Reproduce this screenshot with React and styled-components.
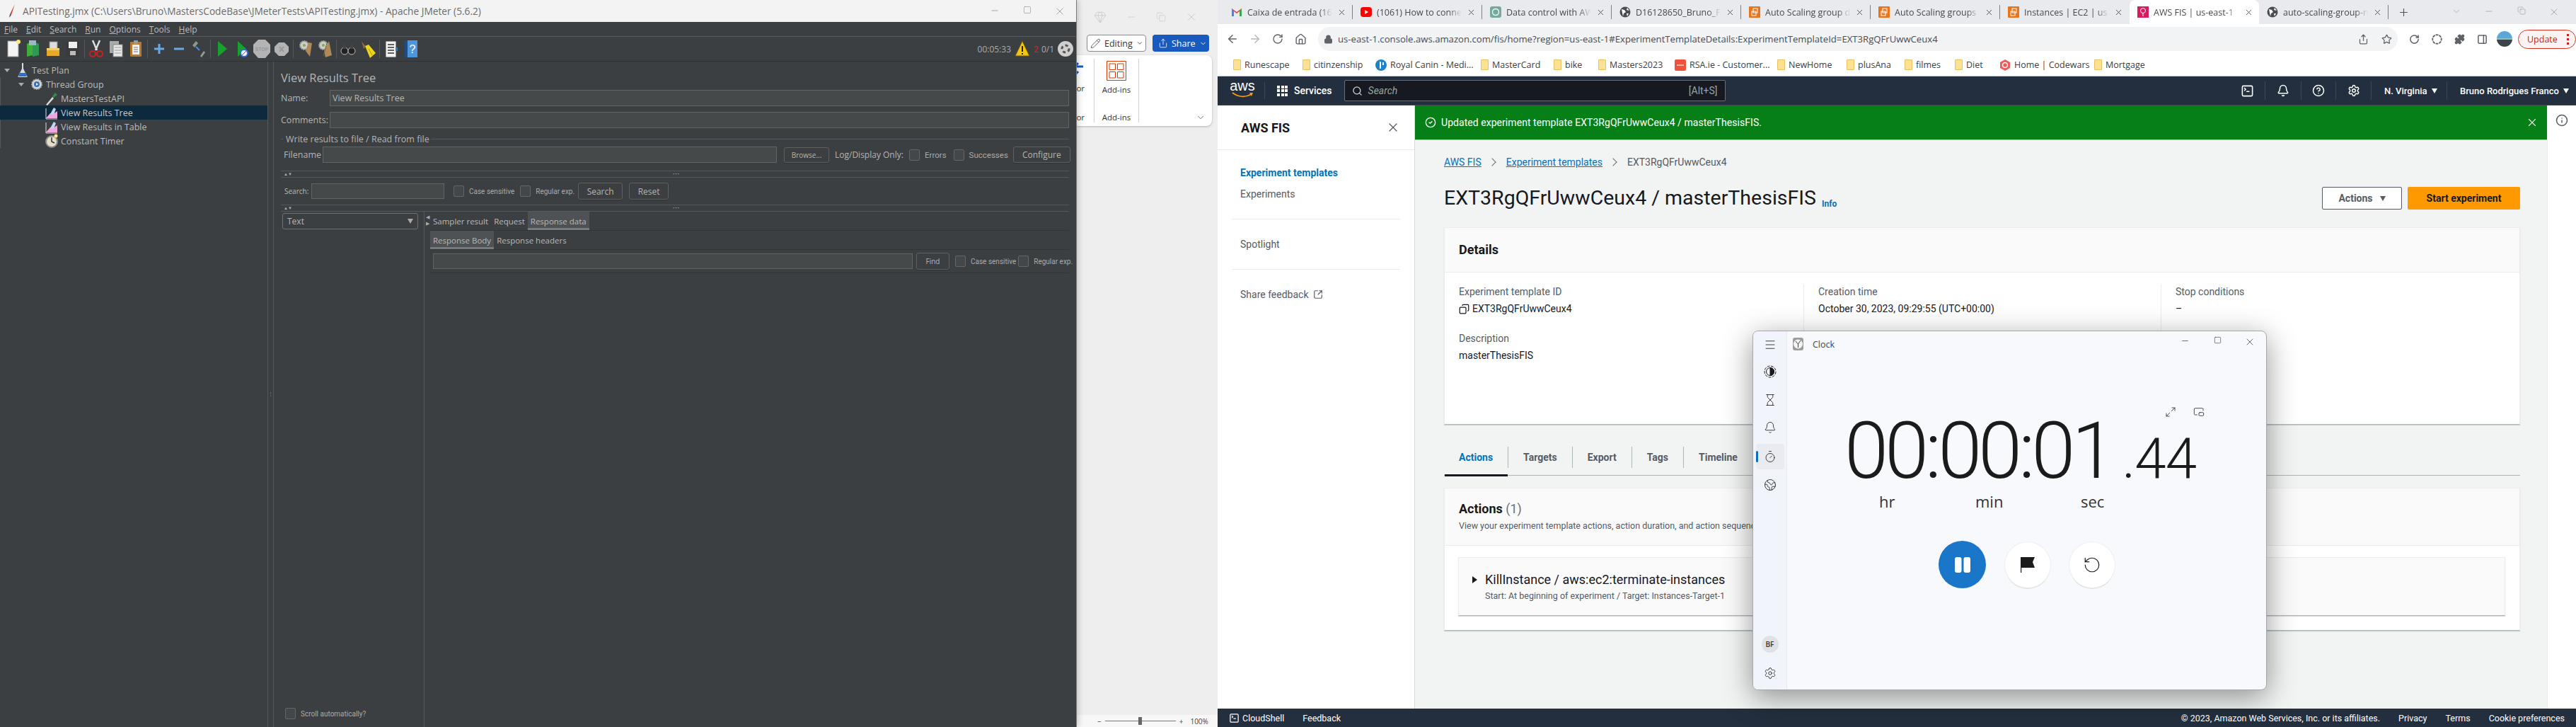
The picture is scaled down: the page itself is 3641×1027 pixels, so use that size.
import React from "react";
import styled, { createGlobalStyle } from "styled-components";
import {
  ArrowLeft, ArrowRight, RotateCw, Home, Lock, Star, Puzzle, PanelRight, Plus, ChevronDown, Minus, X, Square,
  Copy, SquareTerminal, Bell, CircleHelp, Settings, Search as SearchIcon, SquareArrowOutUpRight, CircleCheck, Info,
  Gem, Pencil, Share, Menu, Hourglass, Timer, Maximize2, RotateCcw, Earth, CircleDashed, PictureInPicture2,
} from "lucide-react";

const ui = `"Open Sans", "Noto Sans", sans-serif`;
const ember = `Roboto, "Noto Sans", sans-serif`;

const Global = createGlobalStyle`
  html, body { margin: 0; padding: 0; background: #eee; }
  * { box-sizing: border-box; }
  body { font-family: ${ui}; }
`;

const Desktop = styled.div`
  position: relative;
  width: 3641px;
  height: 1027px;
  display: flex;
  overflow: hidden;
`;

/* ---------- jmeter ---------- */
const JMeter = styled.div`
  width: 1522px;
  height: 100%;
  display: flex;
  flex-direction: column;
  background: #3c3f41;
  color: #bbb;
  font-size: 12px;
  border-right: 1px solid #7a7a7a;
  box-shadow: 2px 0 8px rgba(0, 0, 0, 0.2);
  z-index: 2;
`;
const WinTitle = styled.div`
  height: 31px;
  flex: none;
  display: flex;
  align-items: center;
  background: #f3f3f3;
  color: #6b6b6b;
  font-size: 13.7px;
  padding-left: 11px;
  gap: 9px;
`;
const WinButtons = styled.div`
  margin-left: auto;
  display: flex;
  color: #777;
`;
const WinButton = styled.span`
  width: 46px;
  display: flex;
  justify-content: center;
`;
const MenuBar = styled.div`
  height: 21px;
  flex: none;
  display: flex;
  align-items: center;
  gap: 12px;
  padding-left: 6px;
  border-bottom: 1px solid #5b5e60;
  u { text-decoration: underline; text-underline-offset: 1px; }
`;
const ToolBar = styled.div`
  height: 35px;
  flex: none;
  display: flex;
  align-items: center;
  padding-left: 5px;
  border-bottom: 1px solid #2f3234;
`;
const ToolCell = styled.span`
  width: 28px;
  height: 30px;
  display: flex;
  align-items: center;
  justify-content: center;
`;
const ToolSep = styled.span`
  width: 1px;
  height: 26px;
  margin: 0 2px;
  background: #55585a;
`;
const ToolStatus = styled.div`
  margin-left: auto;
  display: flex;
  align-items: center;
  gap: 4px;
  padding-right: 3px;
  font-size: 12px;
  color: #aaa;
`;
const Panes = styled.div`
  flex: 1;
  display: flex;
  min-height: 0;
`;
const TreePane = styled.div`
  width: 378px;
  flex: none;
  padding-top: 2px;
`;
const TreeRow = styled.div`
  height: 20px;
  display: flex;
  align-items: center;
  gap: 4px;
  padding-left: ${(p) => p.$indent}px;
  font-size: 12.5px;
  background: ${(p) => (p.$selected ? "#0d293e" : "transparent")};
  color: ${(p) => (p.$selected ? "#c8c8c8" : "#bbb")};
  box-shadow: ${(p) => (p.$guides > 0 && !p.$selected ? "inset 10px 0 0 -9px #55585a" : "none")};
`;
const Caret = styled.span`
  width: 0;
  height: 0;
  margin-right: 5px;
  border: 4px solid transparent;
  border-top: 5px solid #aaa;
  border-bottom: 0;
`;
const PaneHandle = styled.div`
  width: 9px;
  flex: none;
  display: flex;
  align-items: center;
  justify-content: center;
  border-left: 1px solid #55585a;
  border-right: 1px solid #55585a;
  color: #999;
  font-size: 7px;
  letter-spacing: 0;
  line-height: 4px;
`;
const FormPane = styled.div`
  flex: 1;
  min-width: 0;
  display: flex;
  flex-direction: column;
  padding: 10px 10px 0;
`;
const PanelTitle = styled.div`
  height: 26px;
  font-size: 16.5px;
  line-height: 26px;
  color: #b4b4b4;
`;
const FieldRow = styled.div`
  display: flex;
  align-items: center;
  height: 23px;
  margin-top: ${(p) => p.$top || 0}px;
  gap: ${(p) => p.$gap || 0}px;
  padding-left: ${(p) => p.$left || 0}px;
`;
const FieldLabel = styled.label`
  width: ${(p) => p.$w}px;
  flex: none;
  font-size: ${(p) => p.$size || 12.5}px;
  margin-left: ${(p) => p.$left || 0}px;
  color: #b4b4b4;
`;
const Input = styled.div`
  height: ${(p) => p.$h || 23}px;
  width: ${(p) => (p.$w ? `${p.$w}px` : "auto")};
  flex: ${(p) => (p.$w ? "none" : 1)};
  padding: 2px 3px;
  font-size: 12.5px;
  color: #b4b4b4;
  background: #45494a;
  border: 1px solid #646464;
`;
const Legend = styled.div`
  display: flex;
  align-items: center;
  gap: 2px;
  height: 16px;
  margin-top: 7px;
  padding-left: 7px;
  font-size: 12.5px;
  color: #b4b4b4;
  &::before { content: ""; order: -1; width: 3px; margin-left: -7px; margin-right: 2px; height: 1px; background: #55585a; }
  &::after { content: ""; flex: 1; height: 1px; background: #55585a; }
`;
const JButton = styled.span`
  height: ${(p) => p.$h || 23}px;
  width: ${(p) => p.$w}px;
  flex: none;
  display: flex;
  align-items: center;
  justify-content: center;
  font-size: ${(p) => p.$size || 12}px;
  color: #b4b4b4;
  border: 1px solid #5e6060;
  border-radius: 3px;
  box-shadow: 0 1px 0 #2e3031;
  margin-left: ${(p) => p.$left || 0}px;
`;
const Check = styled.span`
  display: inline-flex;
  align-items: center;
  gap: 7px;
  font-family: ${ember};
  font-size: ${(p) => p.$size || 10}px;
  color: #aaa;
  margin-left: ${(p) => p.$left || 0}px;
  white-space: nowrap;
  &::before {
    content: "";
    width: 13px;
    height: 14px;
    border: 1px solid #666;
    border-radius: 2px;
    background: #43474a;
  }
`;
const SplitBar = styled.div`
  height: 10px;
  flex: none;
  margin-top: ${(p) => p.$top || 0}px;
  border-top: 1px solid #55585a;
  border-bottom: 1px solid #55585a;
  display: flex;
  align-items: center;
  justify-content: space-between;
  font-size: 6px;
  line-height: 8px;
  color: #aaa;
  padding-left: 4px;
`;
const GripDots = styled.span`
  margin-right: 550px;
  letter-spacing: 1px;
`;
const SearchRow = styled.div`
  height: 38px;
  flex: none;
  display: flex;
  align-items: center;
  padding-left: 5px;
  font-size: 10px;
`;
const SearchLabel = styled.span`
  width: 38px;
  flex: none;
`;
const ResultsArea = styled.div`
  flex: 1;
  min-height: 0;
  display: flex;
`;
const RendererCol = styled.div`
  width: 202px;
  flex: none;
  display: flex;
  flex-direction: column;
  padding-top: 2px;
`;
const Combo = styled.div`
  height: 23px;
  margin: 0 8px 0 2px;
  display: flex;
  align-items: center;
  justify-content: space-between;
  padding: 0 6px;
  font-size: 12px;
  color: #b4b4b4;
  border: 1px solid #707070;
  border-radius: 3px;
`;
const ScrollCheck = styled.div`
  margin-top: auto;
  padding: 0 0 7px 6px;
`;
const VHandle = styled.div`
  width: 9px;
  flex: none;
  border-left: 1px solid #55585a;
  color: #aaa;
  font-size: 7px;
  line-height: 9px;
  padding: 3px 0 0 2px;
`;
const DetailCol = styled.div`
  flex: 1;
  min-width: 0;
  display: flex;
  flex-direction: column;
`;
const JTabs = styled.div`
  height: 27px;
  flex: none;
  display: flex;
  border-bottom: 1px solid #323537;
`;
const JTab = styled.span`
  display: flex;
  align-items: center;
  padding: 0 4px;
  font-size: 11.5px;
  color: #b9b9b9;
  background: ${(p) => (p.$on ? "#4e5254" : "transparent")};
  box-shadow: ${(p) => (p.$on ? "inset 0 -3px 0 #747a80" : "none")};
`;
const FindRow = styled.div`
  height: 33px;
  flex: none;
  display: flex;
  align-items: center;
  padding-left: 4px;
  border-bottom: 1px solid #323537;
`;

/* ---------- word behind ---------- */
const Word = styled.div`
  width: 199px;
  height: 100%;
  flex: none;
  display: flex;
  flex-direction: column;
  background: #eeeeee;
  color: #333;
`;
const WordControls = styled.div`
  height: 47px;
  flex: none;
  display: flex;
  align-items: center;
  gap: 27px;
  padding-left: 24px;
  color: #c4c4c4;
`;
const WordButtons = styled.div`
  height: 28px;
  flex: none;
  display: flex;
  align-items: center;
  gap: 9px;
  padding-left: 14px;
`;
const EditingBtn = styled.span`
  width: 84px;
  height: 24px;
  display: flex;
  align-items: center;
  gap: 5px;
  padding-left: 4px;
  background: #fff;
  border: 1px solid #8a8a8a;
  border-radius: 4px;
  font-size: 12.5px;
`;
const ShareBtn = styled.span`
  width: 80px;
  height: 24px;
  display: flex;
  align-items: center;
  gap: 5px;
  padding-left: 8px;
  background: #185abd;
  color: #fff;
  border-radius: 4px;
  font-size: 12.5px;
`;
const Ribbon = styled.div`
  width: 191px;
  height: 100px;
  flex: none;
  margin-top: 3px;
  display: flex;
  padding: 5px 0;
  background: #fff;
  border-radius: 0 8px 8px 0;
  box-shadow: 0 1px 3px rgba(0, 0, 0, 0.25);
  font-size: 11.5px;
`;
const RibbonGroup = styled.div`
  width: ${(p) => p.$w}px;
  flex: none;
  display: flex;
  flex-direction: column;
  align-items: ${(p) => (p.$clip ? "flex-end" : "center")};
  border-right: 1px solid #d0d0d0;
  padding: ${(p) => (p.$clip ? "3px 13px 0 0" : "3px 0 0")};
`;
const RibbonLabel = styled.span`
  margin-top: ${(p) => p.$top}px;
`;
const RibbonCaption = styled.span`
  margin-top: auto;
  line-height: 14px;
`;
const RibbonMore = styled.div`
  flex: 1;
  display: flex;
  justify-content: flex-end;
  align-items: flex-end;
  padding-right: 9px;
  color: #444;
`;
const WordStatus = styled.div`
  height: 17px;
  flex: none;
  margin-top: auto;
  display: flex;
  align-items: center;
  padding-left: 29px;
  background: #f7f7f7;
  font-size: 10px;
  color: #444;
`;
const ZoomTrack = styled.span`
  width: 100px;
  height: 1px;
  margin: 0 5px;
  background: #777;
  display: flex;
  justify-content: center;
  align-items: center;
  &::after { content: ""; width: 5px; height: 11px; background: #666; }
`;
const ZoomValue = styled.span`
  margin-left: 10px;
`;

/* ---------- chrome ---------- */
const Chrome = styled.div`
  flex: 1;
  min-width: 0;
  display: flex;
  flex-direction: column;
  background: #fff;
`;
const TabStrip = styled.div`
  height: 34px;
  flex: none;
  display: flex;
  align-items: center;
  padding-left: 8px;
  background: #e8eaed;
  color: #45494e;
  font-size: 12.5px;
`;
const ChromeTab = styled.div`
  width: ${(p) => (p.$on ? 183 : 182)}px;
  height: 34px;
  flex: none;
  display: flex;
  align-items: center;
  gap: 7px;
  padding: 0 8px 0 11px;
  background: ${(p) => (p.$on ? "#fff" : "transparent")};
  border-radius: ${(p) => (p.$on ? "8px 8px 0 0" : "0")};
`;
const TabTitle = styled.span`
  flex: 1;
  overflow: hidden;
  white-space: nowrap;
  -webkit-mask-image: linear-gradient(to right, #000 85%, transparent);
`;
const TabSep = styled.span`
  width: 1px;
  height: 20px;
  flex: none;
  background: ${(p) => (p.$hidden ? "transparent" : "#7d8085")};
`;
const NewTab = styled.span`
  margin-left: 13px;
  display: flex;
  color: #555;
`;
const ChromeControls = styled.div`
  margin-left: auto;
  display: flex;
  color: #777;
  padding-right: 8px;
`;
const NavBar = styled.div`
  height: 42px;
  flex: none;
  display: flex;
  align-items: center;
  padding-left: 5px;
  color: #5f6368;
`;
const NavCell = styled.span`
  width: ${(p) => p.$w || 32}px;
  flex: none;
  display: flex;
  justify-content: center;
  color: ${(p) => p.$color || "#5f6368"};
`;
const Omnibox = styled.div`
  flex: 1;
  height: 34px;
  margin-left: 9px;
  margin-right: 7px;
  display: flex;
  align-items: center;
  padding: 0 8px 0 8px;
  gap: 7px;
  background: #f1f3f4;
  border-radius: 17px;
  color: #202124;
  font-size: 13.15px;
`;
const UrlText = styled.span`
  flex: 1;
  color: #4a4d51;
`;
const OmniStar = styled.span`
  display: flex;
  margin-left: 11px;
  color: #5f6368;
`;
const Avatar = styled.span`
  width: 22px;
  height: 22px;
  flex: none;
  border-radius: 50%;
  margin-left: 5px;
  background: linear-gradient(#59a8d8 0 45%, #8fc0c8 45% 55%, #3b4448 55%);
`;
const UpdateBtn = styled.span`
  width: 82px;
  height: 27px;
  margin-left: 8px;
  flex: none;
  display: flex;
  align-items: center;
  justify-content: space-between;
  padding: 0 9px 0 12px;
  border: 1px solid #d93025;
  border-radius: 14px;
  color: #c5221f;
  font-size: 12.5px;
  background: #fdf3f2;
`;
const UpdateDots = styled.span`
  width: 3px;
  height: 15px;
  background: radial-gradient(circle at 50% 1.5px, #c5221f 1.5px, transparent 2px) 0 0 / 3px 6px repeat-y;
`;
const Bookmarks = styled.div`
  height: 32px;
  flex: none;
  display: flex;
  align-items: center;
  padding-left: 22px;
  color: #3c4043;
  font-size: 12.5px;
  border-bottom: 1px solid #c6c8ca;
`;
const Bookmark = styled.span`
  width: ${(p) => p.$w}px;
  flex: none;
  display: flex;
  align-items: center;
  gap: 5px;
  white-space: nowrap;
`;
const FolderMark = styled.span`
  width: 11px;
  height: 15px;
  flex: none;
  background: #fde293;
  border: 1px solid #e8c25a;
  border-radius: 1px;
`;
const AwsBar = styled.div`
  height: 41px;
  flex: none;
  display: flex;
  align-items: center;
  padding-left: 19px;
  background: #232f3e;
  color: #fff;
  font-family: ${ember};
  font-size: 14px;
  border-bottom: 1px solid #414750;
`;
const AwsLogo = styled.span`
  width: 32px;
  height: 30px;
  flex: none;
  display: flex;
  flex-direction: column;
  align-items: center;
  font-size: 20px;
  line-height: 17px;
  font-family: "Liberation Sans", sans-serif;
`;
const AwsDivider = styled.span`
  width: 1px;
  height: 24px;
  margin: 0 17px 0 15px;
  background: #414750;
`;
const Services = styled.span`
  display: flex;
  align-items: center;
  gap: 9px;
  font-weight: 500;
  margin-right: 17px;
`;
const GridIcon = styled.span`
  width: 15px;
  height: 15px;
  display: grid;
  grid-template-columns: repeat(3, 4px);
  gap: 1.5px;
  i { background: #fff; }
`;
const AwsSearch = styled.div`
  width: 539px;
  height: 30px;
  flex: none;
  display: flex;
  align-items: center;
  gap: 8px;
  padding: 0 10px;
  background: #16191f;
  border: 1px solid #687078;
  border-radius: 2px;
  color: #95a5a6;
  i { font-style: italic; flex: 1; }
`;
const AwsRight = styled.div`
  margin-left: auto;
  display: flex;
  align-items: center;
`;
const AwsCell = styled.span`
  width: ${(p) => p.$w}px;
  height: 26px;
  display: flex;
  align-items: center;
  justify-content: ${(p) => (p.$text ? "flex-start" : "center")};
  gap: 6px;
  padding-left: ${(p) => (p.$text ? 18 : 0)}px;
  border-right: ${(p) => (p.$last ? 0 : "1px solid #414750")};
  font-weight: 500;
  font-size: 13px;
  white-space: nowrap;
`;
const DownTri = styled.span`
  width: 0;
  height: 0;
  border: 4px solid transparent;
  border-top: 7px solid ${(p) => p.$color || "#fff"};
  border-bottom: 0;
`;
const ConsoleBody = styled.div`
  flex: 1;
  min-height: 0;
  display: flex;
  font-family: ${ember};
  color: #16191f;
  font-size: 14px;
`;
const SideNav = styled.nav`
  width: 279px;
  flex: none;
  background: #fff;
  border-right: 1px solid #d5dbdb;
`;
const SideHead = styled.div`
  height: 63px;
  display: flex;
  align-items: center;
  justify-content: space-between;
  padding: 0 20px 0 33px;
  font-size: 18px;
  font-weight: 700;
  border-bottom: 1px solid #eaeded;
  color: #16191f;
`;
const SideItem = styled.div`
  height: 20px;
  line-height: 20px;
  margin: ${(p) => p.$top}px 0 0 32px;
  display: flex;
  align-items: center;
  gap: 6px;
  font-weight: ${(p) => (p.$on ? 700 : 400)};
  color: ${(p) => (p.$on ? "#0073bb" : "#545b64")};
`;
const SideRule = styled.hr`
  margin: 25px 20px 0;
  border: 0;
  border-top: 1px solid #eaeded;
`;
const MainCol = styled.main`
  flex: 1;
  min-width: 0;
  display: flex;
  flex-direction: column;
  background: #f2f3f3;
`;
const Flash = styled.div`
  height: 49px;
  flex: none;
  display: flex;
  align-items: center;
  gap: 7px;
  padding: 0 12px 0 14px;
  background: #067f17;
  color: #fff;
  letter-spacing: 0.05px;
  border-bottom: 1px solid #bcc0c0;
`;
const FlashClose = styled.span`
  margin-left: auto;
  display: flex;
  color: #e8f2e8;
`;
const Content = styled.div`
  padding: 21px 38px 0 41px;
`;
const Crumbs = styled.div`
  height: 20px;
  display: flex;
  align-items: center;
  gap: 11px;
  color: #545b64;
`;
const CrumbLink = styled.a`
  color: #0073bb;
  text-decoration: underline;
`;
const CrumbSep = styled.span`
  width: 8px;
  height: 8px;
  margin-right: 5px;
  border-top: 1px solid #687078;
  border-right: 1px solid #687078;
  transform: rotate(45deg);
`;
const HeadRow = styled.div`
  height: 32px;
  margin-top: 25px;
  display: flex;
  align-items: center;
  gap: 8px;
`;
const PageTitle = styled.h1`
  margin: 0;
  font-size: 28.5px;
  font-weight: 400;
  line-height: 32px;
  color: #16191f;
`;
const InfoLink = styled.span`
  font-size: 12px;
  font-weight: 700;
  color: #0073bb;
  align-self: flex-end;
  margin-bottom: 1px;
  flex: 1;
`;
const ActionsBtn = styled.span`
  width: 113px;
  height: 32px;
  display: flex;
  align-items: center;
  justify-content: center;
  gap: 10px;
  background: #fff;
  border: 1px solid #545b64;
  border-radius: 2px;
  font-weight: 700;
  color: #545b64;
`;
const StartBtn = styled.span`
  width: 159px;
  height: 32px;
  display: flex;
  align-items: center;
  justify-content: center;
  background: #ff9900;
  border-radius: 2px;
  font-weight: 700;
  color: #16191f;
`;
const Card = styled.section`
  margin-top: ${(p) => p.$top}px;
  background: #fff;
  border: 1px solid #eaeded;
  border-bottom: 1px solid #aab7b8;
  box-shadow: 0 1px 1px rgba(0, 22, 25, 0.15);
`;
const CardHead = styled.div`
  height: ${(p) => p.$h}px;
  display: flex;
  flex-direction: column;
  justify-content: center;
  padding: 0 20px;
  background: #fafafa;
  border-bottom: 1px solid #eaeded;
`;
const CardTitle = styled.h2`
  margin: 0;
  font-size: 18px;
  line-height: 24px;
  font-weight: 700;
  span { font-weight: 400; color: #687078; }
`;
const CardNote = styled.p`
  margin: 2px 0 0;
  font-size: 12.5px;
  color: #545b64;
  line-height: 20px;
  white-space: nowrap;
`;
const DetailGrid = styled.div`
  height: 214px;
  padding-top: 17px;
  display: grid;
  grid-template-columns: 507px 505px 1fr;
  align-items: start;
`;
const DetailCell = styled.div`
  height: 120px;
  padding-left: 20px;
  border-left: ${(p) => (p.$first ? 0 : "1px solid #eaeded")};
`;
const DLabel = styled.div`
  height: 20px;
  line-height: 20px;
  color: #545b64;
  margin-top: ${(p) => p.$top || 0}px;
`;
const DValue = styled.div`
  height: 20px;
  line-height: 20px;
  margin-top: 4px;
  display: flex;
  align-items: center;
  gap: 4px;
`;
const MirrorCopy = styled(Copy)`
  transform: scaleX(-1);
`;
const ConsoleTabs = styled.div`
  height: 52px;
  margin-top: 20px;
  display: flex;
  align-items: center;
  border-bottom: 1px solid #aab7b8;
`;
const ConsoleTab = styled.span`
  height: 30px;
  display: flex;
  align-items: center;
  padding: 0 21px;
  font-weight: 700;
  color: ${(p) => (p.$on ? "#0073bb" : "#545b64")};
  border-right: ${(p) => (p.$last ? 0 : "1px solid #aab7b8")};
  position: relative;
  &::after {
    content: "";
    display: ${(p) => (p.$on ? "block" : "none")};
    position: absolute;
    left: 1px;
    right: 0;
    bottom: -12px;
    height: 3px;
    background: #16191f;
  }
`;
const CardBody = styled.div`
  padding: 16px 20px 20px 19px;
`;
const ExpandBox = styled.div`
  height: 83px;
  display: flex;
  align-items: flex-start;
  gap: 11px;
  padding: 19px 0 0 19px;
  background: #fafafa;
  border: 1px solid #eaeded;
  border-bottom: 1px solid #aab7b8;
  box-shadow: 0 1px 1px rgba(0, 22, 25, 0.15);
`;
const RightTri = styled.span`
  width: 0;
  height: 0;
  margin-top: 7px;
  border: 5px solid transparent;
  border-left: 7px solid #16191f;
  border-right: 0;
`;
const ExpandTitle = styled.div`
  font-size: 18px;
  line-height: 24px;
`;
const ExpandNote = styled.div`
  margin-top: 1px;
  font-size: 12.5px;
  line-height: 20px;
  color: #545b64;
`;
const InfoStrip = styled.aside`
  width: 41px;
  flex: none;
  display: flex;
  justify-content: center;
  padding-top: 12px;
  background: #fff;
  border-left: 1px solid #eaeded;
  color: #545b64;
`;
const ConsoleFooter = styled.footer`
  height: 26px;
  flex: none;
  display: flex;
  align-items: center;
  gap: 26px;
  padding: 0 16px 0 16px;
  background: #232f3e;
  color: #fff;
  font-family: ${ember};
  font-size: 12.5px;
`;
const FootShell = styled.span`
  display: flex;
  align-items: center;
  gap: 4px;
`;
const FootEnd = styled.span`
  margin-left: auto;
  display: flex;
  gap: 26px;
`;

/* ---------- floating clock window ---------- */
const ClockWindow = styled.div`
  position: absolute;
  left: 2477px;
  top: 467px;
  width: 727px;
  height: 508px;
  display: flex;
  border: 1px solid #a8a8a8;
  border-radius: 8px;
  overflow: hidden;
  background: #f8f9fd;
  color: #1b1b1b;
  box-shadow: 0 10px 42px rgba(0, 0, 0, 0.42);
  z-index: 5;
`;
const ClockRail = styled.div`
  width: 48px;
  flex: none;
  display: flex;
  flex-direction: column;
  align-items: center;
  padding-top: 1px;
  background: #f1f4fb;
  border-right: 1px solid #e6e9f0;
`;
const RailBtn = styled.span`
  position: relative;
  width: 40px;
  height: 36px;
  margin-top: ${(p) => p.$top || 0}px;
  display: flex;
  align-items: center;
  justify-content: center;
  border-radius: 4px;
  background: ${(p) => (p.$on ? "#e9ebf0" : "transparent")};
  &::before {
    content: "";
    display: ${(p) => (p.$on ? "block" : "none")};
    position: absolute;
    left: 0;
    top: 10px;
    width: 3px;
    height: 16px;
    background: #0f6cbd;
    border-radius: 2px;
  }
`;
const RailInitials = styled.span`
  width: 24px;
  height: 24px;
  border-radius: 50%;
  background: #dfe1e6;
  display: flex;
  align-items: center;
  justify-content: center;
  font-size: 10px;
  font-weight: 600;
  color: #333;
`;
const ClockMain = styled.div`
  flex: 1;
  min-width: 0;
  display: flex;
  flex-direction: column;
`;
const ClockTitle = styled.div`
  height: 36px;
  flex: none;
  display: flex;
  align-items: center;
  gap: 13px;
  padding-left: 8px;
  font-size: 12.5px;
  color: #444;
`;
const ClockControls = styled.div`
  margin-left: auto;
  display: flex;
  color: #222;
  margin-top: -6px;
`;
const ClockControl = styled.span`
  width: 46px;
  display: flex;
  justify-content: center;
`;
const ExpandRow = styled.div`
  height: 18px;
  margin-top: 70px;
  display: flex;
  justify-content: flex-end;
  gap: 24px;
  padding-right: 87px;
  color: #222;
  position: relative;
  z-index: 1;
`;
const Digits = styled.div`
  height: 112px;
  margin-top: -11px;
  padding-left: 81px;
  font-family: Roboto, "Liberation Sans", sans-serif;
  font-weight: 300;
  font-size: 112px;
  line-height: 112px;
  letter-spacing: -5.2px;
  white-space: nowrap;
  color: #1b1b1b;
`;
const Cents = styled.span`
  font-size: 80px;
  letter-spacing: -1px;
  margin-left: 14px;
`;
const UnitRow = styled.div`
  height: 30px;
  padding-left: 130px;
  display: grid;
  grid-template-columns: 136px 149px 1fr;
  font-size: 22px;
  line-height: 30px;
  color: #333;
`;
const ControlRow = styled.div`
  margin-top: 41px;
  padding-left: 214px;
  display: flex;
  align-items: center;
  gap: 27px;
`;
const RoundBtn = styled.span`
  width: ${(p) => (p.$primary ? 67 : 64)}px;
  height: ${(p) => (p.$primary ? 67 : 64)}px;
  border-radius: 50%;
  display: flex;
  align-items: center;
  justify-content: center;
  background: ${(p) => (p.$primary ? "#1a76c9" : "#fff")};
  color: ${(p) => (p.$primary ? "#fff" : "#1b1b1b")};
  box-shadow: ${(p) => (p.$primary ? "none" : "0 0 0 1px #eceef2, 0 2px 0 #dcdcdc")};
`;

/* ---------- pictures ---------- */
const ToolIcon = ({ kind }) => {
  const p = { width: 24, height: 28, viewBox: "0 0 24 28" };
  switch (kind) {
    case "new":
      return <svg {...p}><rect x="4" y="3" width="15" height="22" fill="#f4f4f4" stroke="#999" /><circle cx="19" cy="4" r="3" fill="#ffe97a" /></svg>;
    case "templates":
      return <svg {...p}><path d="M3 7l8-4 0 20-8 2z" fill="#3fae3a" /><path d="M11 3l9 4v16l-9 2z" fill="#2f9a4f" /><rect x="6" y="2" width="10" height="7" fill="#9fb6c6" /></svg>;
    case "open":
      return <svg {...p}><rect x="7" y="4" width="11" height="12" fill="#ddd" stroke="#888" /><path d="M3 13h18v11H3z" fill="#e8a82c" /><path d="M3 13h18v3H3z" fill="#f6cf66" /></svg>;
    case "save":
      return <svg {...p}><rect x="3" y="4" width="18" height="20" fill="#3a3a3a" /><rect x="6" y="4" width="12" height="9" fill="#eee" /><rect x="8" y="17" width="8" height="6" fill="#bbb" /></svg>;
    case "cut":
      return <svg {...p}><path d="M7 2l6 14M17 2l-6 14" stroke="#ddd" strokeWidth="2.5" /><circle cx="7" cy="21" r="4" fill="none" stroke="#d01f1f" strokeWidth="2" /><circle cx="17" cy="21" r="4" fill="none" stroke="#d01f1f" strokeWidth="2" /></svg>;
    case "copy":
      return <svg {...p}><rect x="3" y="3" width="13" height="17" fill="#aaa" /><rect x="8" y="8" width="13" height="17" fill="#e8e8e8" stroke="#888" /><path d="M10 12h9M10 16h9M10 20h9" stroke="#999" /></svg>;
    case "paste":
      return <svg {...p}><rect x="4" y="4" width="16" height="21" rx="1" fill="#b87a2a" /><rect x="7" y="8" width="10" height="14" fill="#f2f2f2" /><rect x="9" y="2" width="6" height="5" fill="#999" /><path d="M9 12h6M9 15h6M9 18h6" stroke="#777" /></svg>;
    case "plus":
      return <svg {...p}><path d="M12 7v14M5 14h14" stroke="#6aa8e6" strokeWidth="3" /></svg>;
    case "minus":
      return <svg {...p}><path d="M5 14h14" stroke="#6aa8e6" strokeWidth="3" /></svg>;
    case "toggle":
      return <svg {...p}><path d="M3 9l5-6 3 3-5 6z" fill="#8a9a8a" /><path d="M21 19l-5 7-2-2 5-7z" fill="#8fa08f" /><path d="M8 11l5 5" stroke="#4a90d9" strokeWidth="2" /></svg>;
    case "start":
      return <svg {...p}><path d="M6 3l13 11L6 25z" fill="#16a12f" /></svg>;
    case "startNo":
      return <svg {...p}><path d="M6 3l12 11L6 25z" fill="#16a12f" /><circle cx="15" cy="20" r="5" fill="#eef" stroke="#2d6fd6" strokeWidth="2" /><path d="M12 23l6-6" stroke="#d33" /></svg>;
    case "stop":
      return <svg {...p} width="26" viewBox="0 0 26 28"><path d="M8 1h10l7 7v11l-7 8H8l-7-8V8z" fill="#b4b4b4" /><text x="13" y="17" fontSize="7" fontWeight="700" textAnchor="middle" fill="#999" fontFamily="Liberation Sans">STOP</text></svg>;
    case "shutdown":
      return <svg {...p}><path d="M8 5h8l6 6v7l-6 6H8l-6-6v-7z" fill="#b4b4b4" /><path d="M9 11l6 7M15 11l-6 7" stroke="#999" strokeWidth="2" /></svg>;
    case "clear":
      return <svg {...p}><circle cx="11" cy="9" r="6" fill="#ccc" stroke="#999" strokeDasharray="2 1" strokeWidth="2" /><circle cx="11" cy="9" r="2" fill="#7cb342" /><path d="M17 5l-4 12 6 8 3-19z" fill="#b08a58" /></svg>;
    case "clearAll":
      return <svg {...p}><circle cx="10" cy="9" r="6" fill="#ccc" stroke="#999" strokeDasharray="2 1" strokeWidth="2" /><circle cx="10" cy="9" r="2" fill="#7cb342" /><path d="M18 3l-7 14 2 9 9-3z" fill="#b08a58" /><path d="M15 6l-5 18" stroke="#7c5e38" /></svg>;
    case "find":
      return <svg {...p}><circle cx="7" cy="17" r="5" fill="#222" stroke="#bbb" /><circle cx="17" cy="17" r="5" fill="#222" stroke="#bbb" /><rect x="5" y="8" width="4" height="6" fill="#444" /><rect x="15" y="8" width="4" height="6" fill="#444" /></svg>;
    case "reset":
      return <svg {...p}><path d="M3 3l6 8-3 3z" fill="#8a6d3b" /><path d="M8 10l5-2 10 12-8 7z" fill="#eed31f" /><path d="M13 14l5 9" stroke="#b39b10" /></svg>;
    case "log":
      return <svg {...p}><rect x="4" y="3" width="15" height="23" fill="#f2f2f2" stroke="#444" /><path d="M7 8h9M7 12h9M7 16h9M7 20h9" stroke="#333" strokeWidth="1.5" /><rect x="18" y="12" width="3" height="5" fill="#2a7cd1" /></svg>;
    case "help":
      return <svg {...p}><rect x="3" y="2" width="5" height="24" fill="#1e4c80" /><rect x="7" y="2" width="14" height="24" fill="#4e95de" /><text x="14" y="20" fontSize="16" textAnchor="middle" fill="#fff" fontFamily="Liberation Sans">?</text></svg>;
    default:
      return null;
  }
};

const TreeIcon = ({ kind }) => {
  const p = { width: 18, height: 20, viewBox: "0 0 18 20" };
  if (kind === "flask") return <svg {...p}><path d="M8 0h2v8l5 10a1 1 0 0 1-1 2H4a1 1 0 0 1-1-2l5-10z" fill="#d5dbe2" /><path d="M5 14h8l2 5H3z" fill="#2a6fd0" /></svg>;
  if (kind === "gear") return <svg {...p}><circle cx="9" cy="10" r="7" fill="#d8d8d8" stroke="#aaa" strokeWidth="2" strokeDasharray="2 1.4" /><circle cx="9" cy="10" r="4" fill="#3670b8" /><path d="M8 8l3 2-3 2z" fill="#fff" /></svg>;
  if (kind === "dropper") return <svg {...p}><path d="M1 19l9-11 2 2-9 10z" fill="#dcdcdc" /><path d="M10 7l4-5 3 3-5 4z" fill="#2d8f4e" /></svg>;
  if (kind === "chart") return <svg {...p}><path d="M1 18h16V8l-6 4-4-1z" fill="#f0a6dc" /><path d="M7 12l5-9 3 2-3 8z" fill="#bcd6f5" /><path d="M1 4v15h16" stroke="#ddd" fill="none" /></svg>;
  return <svg {...p}><circle cx="9" cy="11" r="8" fill="#e6dfc8" stroke="#8a8a8a" strokeWidth="2" /><path d="M9 5v6l4 2" stroke="#333" strokeWidth="1.5" fill="none" /><circle cx="15" cy="3" r="2.5" fill="#ffe97a" /></svg>;
};

const Favicon = ({ kind }) => {
  const p = { width: 16, height: 16, viewBox: "0 0 16 16", style: { flex: "none" } };
  if (kind === "gmail") return <svg {...p}><path d="M1 3v11h3V7l4 3 4-3v7h3V3l-7 5z" fill="#ea4335" /><path d="M1 3v11h3V7z" fill="#4285f4" /><path d="M12 7v7h3V3z" fill="#34a853" /></svg>;
  if (kind === "yt") return <svg {...p}><rect y="1" width="16" height="14" rx="4" fill="#f00" /><path d="M6 5l5 3-5 3z" fill="#fff" /></svg>;
  if (kind === "gpt") return <svg {...p}><rect width="16" height="16" rx="3" fill="#74aa9c" /><circle cx="8" cy="8" r="4.5" fill="none" stroke="#fff" strokeWidth="1.3" /></svg>;
  if (kind === "globe") return <svg {...p}><circle cx="8" cy="8" r="7.5" fill="#4a4d51" /><path d="M3 4l4 1 2 3-3 2-1 4M11 2l-1 3 4 1M10 10l3 0-2 4" fill="#fff" /></svg>;
  if (kind === "aws") return <svg {...p}><rect width="16" height="16" rx="1" fill="#e8741c" /><rect x="6" y="3" width="6" height="6" fill="none" stroke="#fff" /><rect x="4" y="7" width="6" height="6" fill="none" stroke="#fff" /></svg>;
  if (kind === "fis") return <svg {...p}><rect width="16" height="16" fill="#d81b60" /><circle cx="8" cy="6" r="3.5" fill="none" stroke="#fff" /><path d="M8 9v5" stroke="#fff" /></svg>;
  if (kind === "canin") return <svg {...p}><circle cx="8" cy="8" r="8" fill="#1d82c8" /><path d="M6 3h2v10H6zM10 4h2v4h-2z" fill="#fff" /></svg>;
  if (kind === "rsa") return <svg {...p}><rect width="16" height="16" rx="2" fill="#f0513a" /><rect x="3" y="7" width="10" height="2" fill="#f7b9ad" /></svg>;
  return <svg {...p}><path d="M8 0l7 4v8l-7 4-7-4V4z" fill="#ef5b5b" /><circle cx="8" cy="8" r="3.5" fill="none" stroke="#fff" strokeWidth="1.5" /></svg>;
};

const tabs = [
  ["gmail", "Caixa de entrada (16.1"],
  ["yt", "(1061) How to connec"],
  ["gpt", "Data control with AWS"],
  ["globe", "D16128650_Bruno_Fra"],
  ["aws", "Auto Scaling group d"],
  ["aws", "Auto Scaling groups |"],
  ["aws", "Instances | EC2 | us-ea"],
  ["fis", "AWS FIS | us-east-1", true],
  ["globe", "auto-scaling-group-n"],
];

const bookmarks = [
  ["Runescape", 98], ["citinzenship", 103], ["Royal Canin - Medi...", 149, "canin"], ["MasterCard", 103], ["bike", 63],
  ["Masters2023", 108], ["RSA.ie - Customer...", 145, "rsa"], ["NewHome", 98], ["plusAna", 82], ["filmes", 71], ["Diet", 63],
  ["Home | Codewars", 134, "cw"], ["Mortgage", 90],
];

const toolGroups = [
  ["new", "templates", "open", "save"],
  ["cut", "copy", "paste"],
  ["plus", "minus", "toggle"],
  ["start", "startNo", "stop", "shutdown"],
  ["clear", "clearAll"],
  ["find", "reset"],
  ["log", "help"],
];

const treeRows = [
  { name: "Test Plan", icon: "flask", indent: 6, caret: true },
  { name: "Thread Group", icon: "gear", indent: 26, caret: true, guides: 1 },
  { name: "MastersTestAPI", icon: "dropper", indent: 64, guides: 2 },
  { name: "View Results Tree", icon: "chart", indent: 64, guides: 2, selected: true },
  { name: "View Results in Table", icon: "chart", indent: 64, guides: 2 },
  { name: "Constant Timer", icon: "timer", indent: 64, guides: 2 },
];

const JMeterWindow = () => (
  <JMeter>
    <WinTitle>
      <svg width="12" height="22" viewBox="0 0 12 22"><path d="M10 1L3 15l2 1z" fill="#d93a2b" /><path d="M3 15l-1 5 3-4z" fill="#444" /></svg>
      APITesting.jmx (C:\Users\Bruno\MastersCodeBase\JMeterTests\APITesting.jmx) - Apache JMeter (5.6.2)
      <WinButtons>
        <WinButton><Minus size={14} strokeWidth={1} /></WinButton>
        <WinButton><Square size={12} strokeWidth={1} /></WinButton>
        <WinButton><X size={16} strokeWidth={1} /></WinButton>
      </WinButtons>
    </WinTitle>
    <MenuBar>
      <span><u>F</u>ile</span><span><u>E</u>dit</span><span><u>S</u>earch</span><span><u>R</u>un</span>
      <span><u>O</u>ptions</span><span><u>T</u>ools</span><span><u>H</u>elp</span>
    </MenuBar>
    <ToolBar>
      {toolGroups.map((group, i) => (
        <React.Fragment key={i}>
          {i > 0 && <ToolSep />}
          {group.map((k) => <ToolCell key={k}><ToolIcon kind={k} /></ToolCell>)}
        </React.Fragment>
      ))}
      <ToolStatus>
        <span>00:05:33</span>
        <svg width="24" height="26" viewBox="0 0 24 26"><path d="M12 2l10 21H2z" fill="#f5c60d" stroke="#6d5c10" /><path d="M12 9v8M12 19v2" stroke="#222" strokeWidth="2" /></svg>
        <span style={{ color: "#e81e1e" }}>2</span>
        <span>0/1</span>
        <svg width="24" height="26" viewBox="0 0 24 26"><circle cx="12" cy="13" r="11" fill="#cfcfcf" /><circle cx="12" cy="13" r="5" fill="none" stroke="#555" strokeWidth="3" strokeDasharray="4 3.5" /></svg>
      </ToolStatus>
    </ToolBar>
    <Panes>
      <TreePane>
        {treeRows.map((r) => (
          <TreeRow key={r.name} $indent={r.indent} $selected={r.selected} $guides={r.guides}>
            {r.caret && <Caret />}
            <TreeIcon kind={r.icon} />
            {r.name}
          </TreeRow>
        ))}
      </TreePane>
      <PaneHandle>⋮</PaneHandle>
      <FormPane>
        <PanelTitle>View Results Tree</PanelTitle>
        <FieldRow $top={4}>
          <FieldLabel $w={69}>Name:</FieldLabel>
          <Input>View Results Tree</Input>
        </FieldRow>
        <FieldRow $top={8}>
          <FieldLabel $w={69}>Comments:</FieldLabel>
          <Input />
        </FieldRow>
        <Legend>Write results to file / Read from file</Legend>
        <FieldRow $top={3} $left={4}>
          <FieldLabel $w={55}>Filename</FieldLabel>
          <Input $w={642} />
          <JButton $w={64} $h={22} $left={10} $size={10}>Browse...</JButton>
          <FieldLabel $w={105} $size={12} $left={8}>Log/Display Only:</FieldLabel>
          <Check $size={11.5}>Errors</Check>
          <Check $size={11.5} $left={10}>Successes</Check>
          <JButton $w={81} $left={7}>Configure</JButton>
        </FieldRow>
        <SplitBar $top={11}><span>▲▼</span><GripDots>•••</GripDots></SplitBar>
        <SearchRow>
          <SearchLabel>Search:</SearchLabel>
          <Input $w={188} $h={22} />
          <Check $left={13}>Case sensitive</Check>
          <Check $left={8}>Regular exp.</Check>
          <JButton $w={63} $h={24} $left={5} $size={12}>Search</JButton>
          <JButton $w={56} $h={24} $left={9} $size={12}>Reset</JButton>
        </SearchRow>
        <SplitBar><span>▲▼</span><GripDots>•••</GripDots></SplitBar>
        <ResultsArea>
          <RendererCol>
            <Combo>Text <DownTri $color="#aaa" /></Combo>
            <ScrollCheck><Check>Scroll automatically?</Check></ScrollCheck>
          </RendererCol>
          <VHandle>◀<br />▶</VHandle>
          <DetailCol>
            <JTabs>
              <JTab>Sampler result</JTab>
              <JTab>Request</JTab>
              <JTab $on>Response data</JTab>
            </JTabs>
            <JTabs>
              <JTab $on>Response Body</JTab>
              <JTab>Response headers</JTab>
            </JTabs>
            <FindRow>
              <Input $w={678} $h={22} />
              <JButton $w={47} $h={24} $left={5} $size={10}>Find</JButton>
              <Check $left={8}>Case sensitive</Check>
              <Check $left={3}>Regular exp.</Check>
            </FindRow>
          </DetailCol>
        </ResultsArea>
      </FormPane>
    </Panes>
  </JMeter>
);

const WordWindow = () => (
  <Word>
    <WordControls>
      <Gem size={18} strokeWidth={1} />
      <Minus size={16} strokeWidth={1} />
      <Copy size={14} strokeWidth={1} />
      <X size={18} strokeWidth={1} />
    </WordControls>
    <WordButtons>
      <EditingBtn><Pencil size={15} strokeWidth={1.2} />Editing<ChevronDown size={10} /></EditingBtn>
      <ShareBtn><Share size={14} strokeWidth={1.4} />Share<ChevronDown size={11} /></ShareBtn>
    </WordButtons>
    <Ribbon>
      <RibbonGroup $w={25} $clip>
        <svg width="12" height="24" viewBox="0 0 12 24"><path d="M0 8h10M3 3l-3 3M3 15l-3 3" stroke="#185abd" strokeWidth="3" fill="none" /></svg>
        <RibbonLabel $top={7}>or</RibbonLabel>
        <RibbonCaption>or</RibbonCaption>
      </RibbonGroup>
      <RibbonGroup $w={63}>
        <svg width="28" height="28" viewBox="0 0 28 28"><path d="M.5.5h27v27H.5zM4 4h8.500v8.500H4zM15.500 4H24v8.500h-8.500zM4 15.500h8.500V24H4zM15.500 15.500H24V24h-8.500z" fill="none" stroke="#d83b01" /></svg>
        <RibbonLabel $top={5}>Add-ins</RibbonLabel>
        <RibbonCaption>Add-ins</RibbonCaption>
      </RibbonGroup>
      <RibbonMore><ChevronDown size={14} strokeWidth={1.2} /></RibbonMore>
    </Ribbon>
    <WordStatus>
      −<ZoomTrack />+<ZoomValue>100%</ZoomValue>
    </WordStatus>
  </Word>
);

const ChromeWindow = () => (
  <Chrome>
    <TabStrip>
      {tabs.map(([icon, title, on], i) => (
        <React.Fragment key={title}>
          <ChromeTab $on={on}>
            <Favicon kind={icon} />
            <TabTitle>{title}</TabTitle>
            <X size={13} strokeWidth={1.6} />
          </ChromeTab>
          {!on && <TabSep $hidden={i === 6} />}
        </React.Fragment>
      ))}
      <NewTab><Plus size={17} strokeWidth={1.6} /></NewTab>
      <ChromeControls>
        <NavCell $w={46} $color="#888"><ChevronDown size={14} strokeWidth={1} /></NavCell>
        <NavCell $w={46} $color="#888"><Minus size={14} strokeWidth={1} /></NavCell>
        <NavCell $w={46} $color="#888"><Copy size={12} strokeWidth={1} /></NavCell>
        <NavCell $w={46} $color="#888"><X size={16} strokeWidth={1} /></NavCell>
      </ChromeControls>
    </TabStrip>
    <NavBar>
      <NavCell><ArrowLeft size={18} /></NavCell>
      <NavCell $color="#b6b8bb"><ArrowRight size={18} /></NavCell>
      <NavCell><RotateCw size={16} /></NavCell>
      <NavCell><Home size={17} /></NavCell>
      <Omnibox>
        <Lock size={13} fill="#5f6368" color="#5f6368" />
        <UrlText>us-east-1.console.aws.amazon.com/fis/home?region=us-east-1#ExperimentTemplateDetails:ExperimentTemplateId=EXT3RgQFrUwwCeux4</UrlText>
        <Share size={15} color="#5f6368" />
        <OmniStar><Star size={15} /></OmniStar>
      </Omnibox>
      <NavCell><RotateCw size={15} strokeWidth={2.4} /></NavCell>
      <NavCell><CircleDashed size={15} strokeWidth={3} /></NavCell>
      <NavCell><Puzzle size={15} fill="#5f6368" /></NavCell>
      <NavCell><PanelRight size={15} strokeWidth={2.4} /></NavCell>
      <Avatar />
      <UpdateBtn>Update<UpdateDots /></UpdateBtn>
    </NavBar>
    <Bookmarks>
      {bookmarks.map(([label, w, icon]) => (
        <Bookmark key={label} $w={w}>
          {icon ? <Favicon kind={icon} /> : <FolderMark />}
          {label}
        </Bookmark>
      ))}
    </Bookmarks>
    <AwsBar>
      <AwsLogo>
        aws
        <svg width="32" height="9" viewBox="0 0 32 9"><path d="M2 1c8 6 18 7 27 2" stroke="#f90" strokeWidth="2" fill="none" /><path d="M26 1l5 0-2 5z" fill="#f90" /></svg>
      </AwsLogo>
      <AwsDivider />
      <Services><GridIcon>{Array.from({ length: 9 }, (_, i) => <i key={i} />)}</GridIcon>Services</Services>
      <AwsSearch><SearchIcon size={15} color="#d5dbdb" /><i>Search</i><span>[Alt+S]</span></AwsSearch>
      <AwsRight>
        <AwsCell $w={50}><SquareTerminal size={19} /></AwsCell>
        <AwsCell $w={51}><Bell size={18} /></AwsCell>
        <AwsCell $w={49}><CircleHelp size={18} /></AwsCell>
        <AwsCell $w={50}><Settings size={18} /></AwsCell>
        <AwsCell $w={107} $text>N. Virginia<DownTri /></AwsCell>
        <AwsCell $w={182} $text $last>Bruno Rodrigues Franco<DownTri /></AwsCell>
      </AwsRight>
    </AwsBar>
    <ConsoleBody>
      <SideNav>
        <SideHead>AWS FIS<X size={20} strokeWidth={1.5} color="#545b64" /></SideHead>
        <SideItem $on $top={22}>Experiment templates</SideItem>
        <SideItem $top={10}>Experiments</SideItem>
        <SideRule />
        <SideItem $top={25}>Spotlight</SideItem>
        <SideRule />
        <SideItem $top={25}>Share feedback <SquareArrowOutUpRight size={14} strokeWidth={2} /></SideItem>
      </SideNav>
      <MainCol>
        <Flash>
          <CircleCheck size={16} />
          Updated experiment template EXT3RgQFrUwwCeux4 / masterThesisFIS.
          <FlashClose><X size={18} strokeWidth={1.5} /></FlashClose>
        </Flash>
        <Content>
          <Crumbs>
            <CrumbLink>AWS FIS</CrumbLink><CrumbSep />
            <CrumbLink>Experiment templates</CrumbLink><CrumbSep />
            EXT3RgQFrUwwCeux4
          </Crumbs>
          <HeadRow>
            <PageTitle>EXT3RgQFrUwwCeux4 / masterThesisFIS</PageTitle>
            <InfoLink>Info</InfoLink>
            <ActionsBtn>Actions <DownTri $color="#545b64" /></ActionsBtn>
            <StartBtn>Start experiment</StartBtn>
          </HeadRow>
          <Card $top={25}>
            <CardHead $h={63}><CardTitle>Details</CardTitle></CardHead>
            <DetailGrid>
              <DetailCell $first>
                <DLabel>Experiment template ID</DLabel>
                <DValue><MirrorCopy size={15} strokeWidth={2} />EXT3RgQFrUwwCeux4</DValue>
                <DLabel $top={22}>Description</DLabel>
                <DValue>masterThesisFIS</DValue>
              </DetailCell>
              <DetailCell>
                <DLabel>Creation time</DLabel>
                <DValue>October 30, 2023, 09:29:55 (UTC+00:00)</DValue>
              </DetailCell>
              <DetailCell>
                <DLabel>Stop conditions</DLabel>
                <DValue>–</DValue>
              </DetailCell>
            </DetailGrid>
          </Card>
          <ConsoleTabs>
            <ConsoleTab $on>Actions</ConsoleTab>
            <ConsoleTab>Targets</ConsoleTab>
            <ConsoleTab>Export</ConsoleTab>
            <ConsoleTab>Tags</ConsoleTab>
            <ConsoleTab $last>Timeline</ConsoleTab>
          </ConsoleTabs>
          <Card $top={17}>
            <CardHead $h={81}>
              <CardTitle>Actions <span>(1)</span></CardTitle>
              <CardNote>View your experiment template actions, action duration, and action sequence.</CardNote>
            </CardHead>
            <CardBody>
              <ExpandBox>
                <RightTri />
                <div>
                  <ExpandTitle>KillInstance / aws:ec2:terminate-instances</ExpandTitle>
                  <ExpandNote>Start: At beginning of experiment / Target: Instances-Target-1</ExpandNote>
                </div>
              </ExpandBox>
            </CardBody>
          </Card>
        </Content>
      </MainCol>
      <InfoStrip><Info size={18} strokeWidth={2} /></InfoStrip>
    </ConsoleBody>
    <ConsoleFooter>
      <FootShell><SquareTerminal size={15} />CloudShell</FootShell>
      <span>Feedback</span>
      <FootEnd>
        <span>© 2023, Amazon Web Services, Inc. or its affiliates.</span>
        <span>Privacy</span><span>Terms</span><span>Cookie preferences</span>
      </FootEnd>
    </ConsoleFooter>
  </Chrome>
);

const ClockApp = () => (
  <ClockWindow>
    <ClockRail>
      <RailBtn><Menu size={18} strokeWidth={1.1} /></RailBtn>
      <RailBtn $top={2}>
        <svg width="18" height="18" viewBox="0 0 18 18" fill="none" stroke="#1b1b1b"><circle cx="9" cy="9" r="8" strokeDasharray="4 1.500" /><circle cx="9" cy="9" r="5.500" /><path d="M9 3.500a5.500 5.500 0 0 1 0 11z" fill="#1b1b1b" /></svg>
      </RailBtn>
      <RailBtn $top={4}><Hourglass size={18} strokeWidth={1.1} /></RailBtn>
      <RailBtn $top={3}><Bell size={18} strokeWidth={1.1} /></RailBtn>
      <RailBtn $on $top={5}><Timer size={18} strokeWidth={1.1} /></RailBtn>
      <RailBtn $top={4}><Earth size={18} strokeWidth={1.1} /></RailBtn>
      <RailBtn $top={189}><RailInitials>BF</RailInitials></RailBtn>
      <RailBtn $top={5}><Settings size={18} strokeWidth={1.1} /></RailBtn>
    </ClockRail>
    <ClockMain>
      <ClockTitle>
        <svg width="15" height="18" viewBox="0 0 15 18"><rect width="15" height="18" rx="3" fill="#9b9b9b" /><circle cx="7.500" cy="9" r="6.500" fill="#f3f3f3" /><path d="M4 5l3.500 4L11 4M7.500 9v5" stroke="#444" fill="none" /></svg>
        Clock
        <ClockControls>
          <ClockControl><Minus size={13} strokeWidth={1.2} /></ClockControl>
          <ClockControl><Square size={11} strokeWidth={1.2} /></ClockControl>
          <ClockControl><X size={16} strokeWidth={1} /></ClockControl>
        </ClockControls>
      </ClockTitle>
      <ExpandRow>
        <Maximize2 size={16} strokeWidth={1.2} />
        <PictureInPicture2 size={16} strokeWidth={1.2} />
      </ExpandRow>
      <Digits>00:00:01<Cents>.44</Cents></Digits>
      <UnitRow><span>hr</span><span>min</span><span>sec</span></UnitRow>
      <ControlRow>
        <RoundBtn $primary>
          <svg width="24" height="24" viewBox="0 0 24 24" fill="#fff"><rect x="1" y="1" width="9.500" height="22" rx="3" /><rect x="13.500" y="1" width="9.500" height="22" rx="3" /></svg>
        </RoundBtn>
        <RoundBtn>
          <svg width="22" height="24" viewBox="0 0 22 24" fill="#1b1b1b"><path d="M1 1h1.200v22H1z" /><path d="M1 1h20l-3 7 3 8H1z" /></svg>
        </RoundBtn>
        <RoundBtn><RotateCcw size={26} strokeWidth={1.1} /></RoundBtn>
      </ControlRow>
    </ClockMain>
  </ClockWindow>
);

export default function App() {
  return (
    <>
      <Global />
      <Desktop>
        <JMeterWindow />
        <WordWindow />
        <ChromeWindow />
        <ClockApp />
      </Desktop>
    </>
  );
}
